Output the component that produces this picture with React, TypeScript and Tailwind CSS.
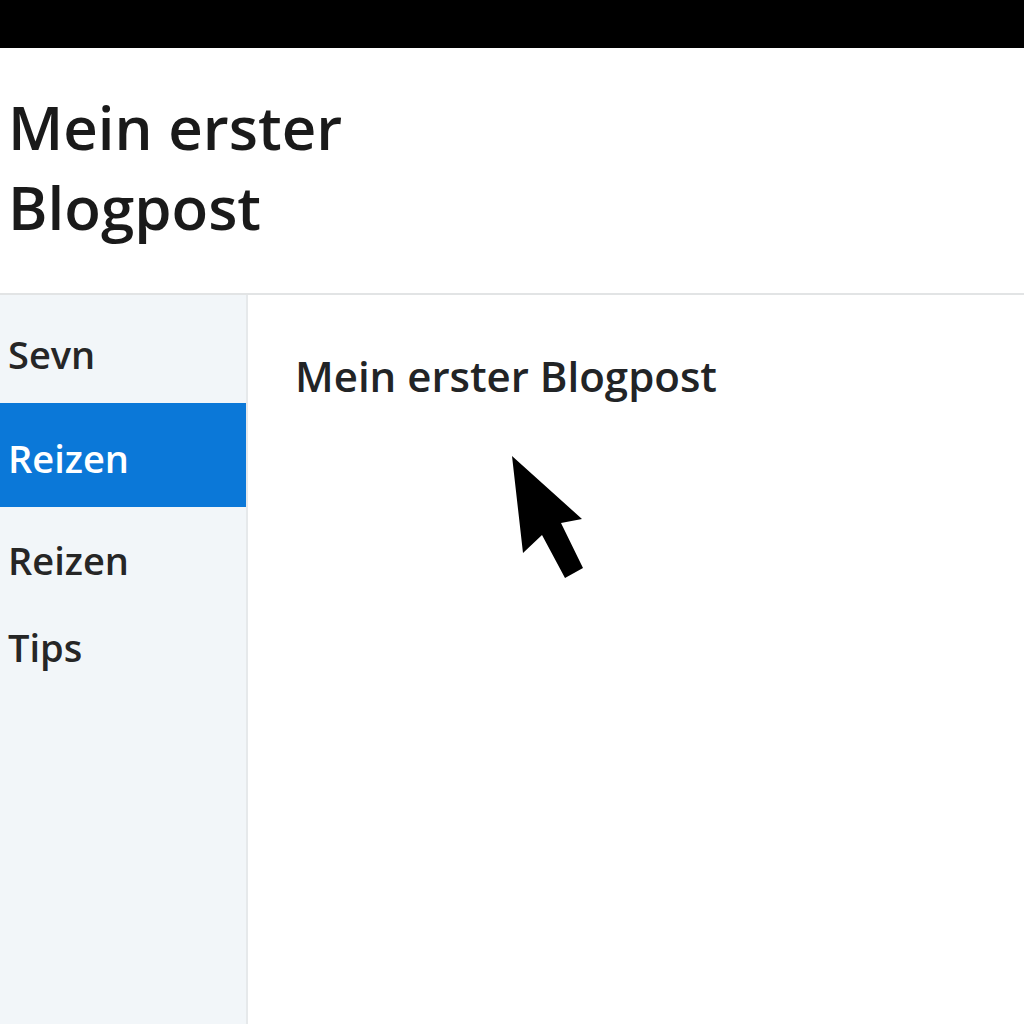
export default function App() {
  const items = [
    { label: "Sevn", cls: "h-[108px] pt-[10px]", active: false },
    { label: "Reizen", cls: "h-[104px] pt-[6px]", active: true },
    { label: "Reizen", cls: "h-[100px] pt-[6px]", active: false },
    { label: "Tips", cls: "h-[80px]", active: false },
  ];

  return (
    <div className="relative h-[1024px] w-[1024px] overflow-hidden bg-white font-['Open_Sans',sans-serif]">
      {/* top bar */}
      <div className="h-12 bg-black" />

      {/* header */}
      <header className="h-[247px] border-b-2 border-[#e2e4e5] pl-2 pt-[39px]">
        <h1 className="text-[60px] font-semibold leading-[80px] text-[#1a1a1a]">
          Mein erster
          <br />
          Blogpost
        </h1>
      </header>

      <div className="flex h-[729px]">
        {/* sidebar */}
        <aside className="w-[248px] border-r-2 border-[#e6e9eb] bg-[#f2f6f9]">
          {items.map((item, i) => (
            <div
              key={i}
              className={`flex items-center pl-2 text-[38px] font-semibold leading-none ${item.cls} ${
                item.active ? "bg-[#0b78d8] text-white" : "text-[#262626]"
              }`}
            >
              {item.label}
            </div>
          ))}
        </aside>

        {/* main */}
        <main className="flex-1 pl-[47px] pt-[54px]">
          <h2 className="text-[42px] font-semibold leading-[54px] text-[#222426]">
            Mein erster Blogpost
          </h2>
        </main>
      </div>

      {/* mouse cursor */}
      <svg
        className="absolute left-0 top-0"
        width="1024"
        height="1024"
        viewBox="0 0 1024 1024"
      >
        <path
          d="M512 456 L523 553 L542 535 L565 578 L583 568 L561 523 L582 519 Z"
          fill="#000"
        />
      </svg>
    </div>
  );
}
